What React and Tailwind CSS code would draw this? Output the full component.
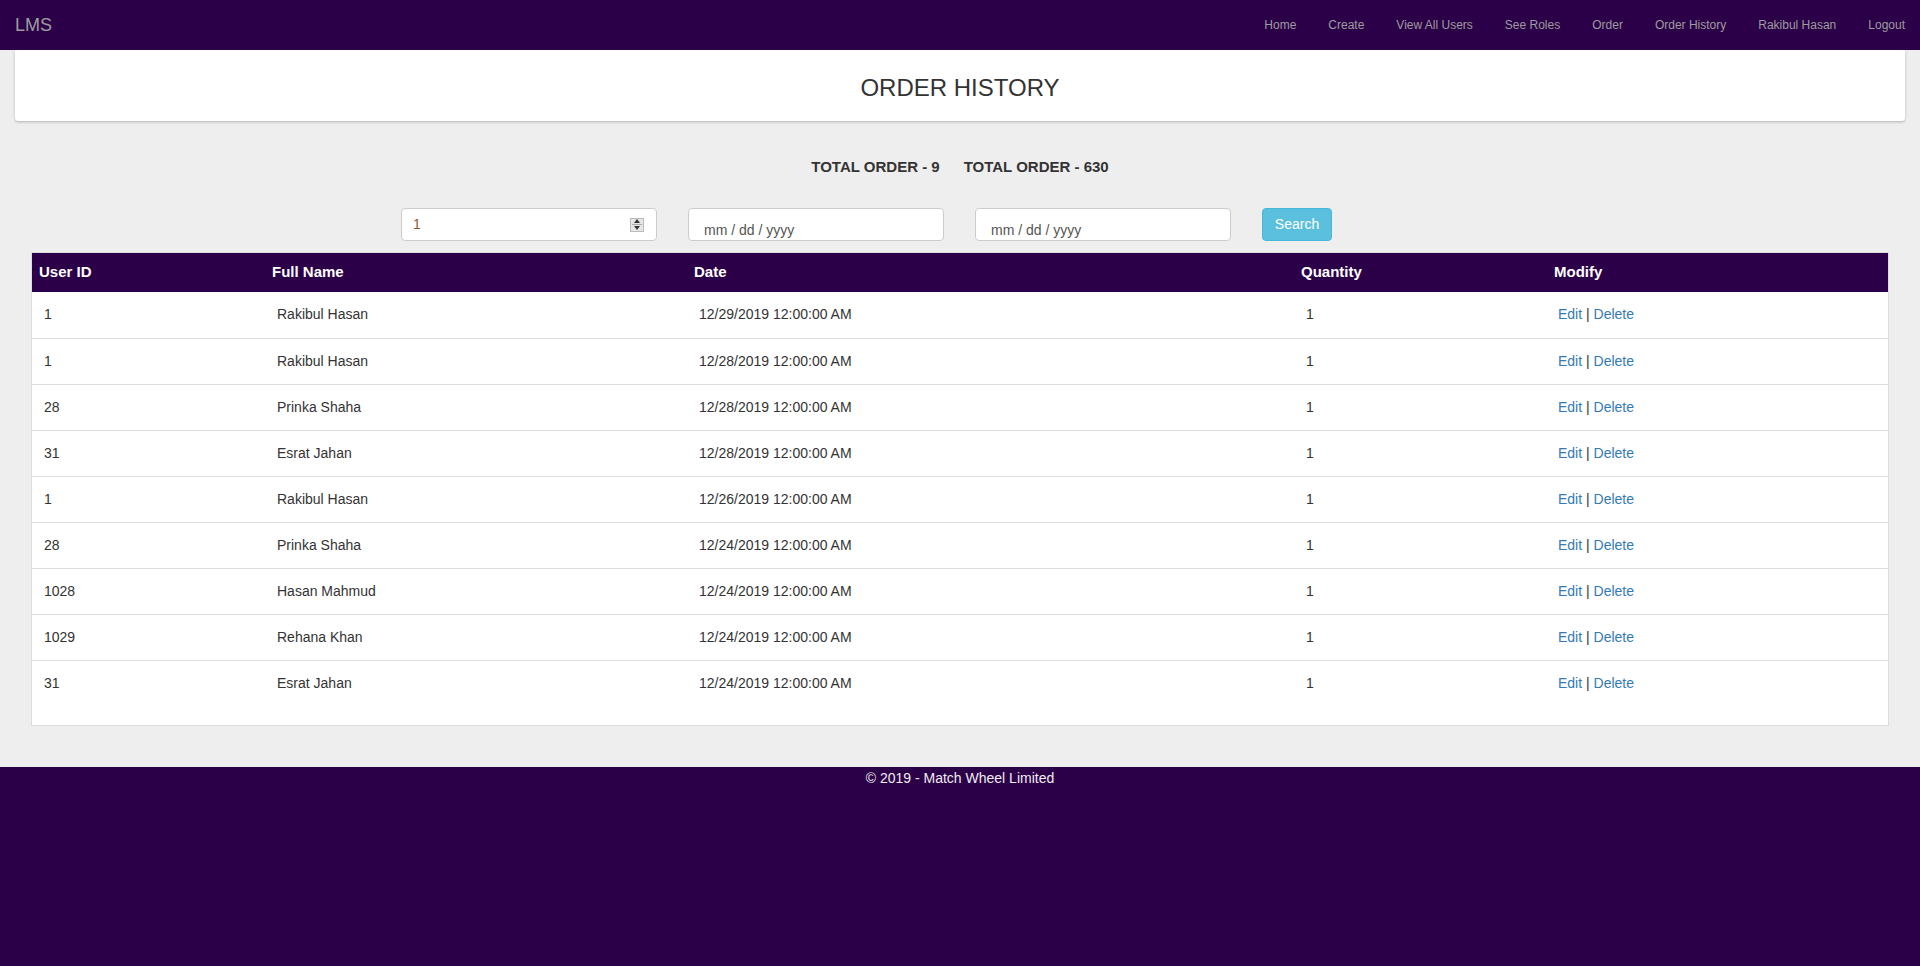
import React from "react";

const navLinks = ["Home", "Create", "View All Users", "See Roles", "Order", "Order History", "Rakibul Hasan", "Logout"];

const orders = [
  { id: 1, name: "Rakibul Hasan", date: "12/29/2019 12:00:00 AM", qty: 1 },
  { id: 1, name: "Rakibul Hasan", date: "12/28/2019 12:00:00 AM", qty: 1 },
  { id: 28, name: "Prinka Shaha", date: "12/28/2019 12:00:00 AM", qty: 1 },
  { id: 31, name: "Esrat Jahan", date: "12/28/2019 12:00:00 AM", qty: 1 },
  { id: 1, name: "Rakibul Hasan", date: "12/26/2019 12:00:00 AM", qty: 1 },
  { id: 28, name: "Prinka Shaha", date: "12/24/2019 12:00:00 AM", qty: 1 },
  { id: 1028, name: "Hasan Mahmud", date: "12/24/2019 12:00:00 AM", qty: 1 },
  { id: 1029, name: "Rehana Khan", date: "12/24/2019 12:00:00 AM", qty: 1 },
  { id: 31, name: "Esrat Jahan", date: "12/24/2019 12:00:00 AM", qty: 1 },
];

const DateBox = () => (
  <div className="w-[256px] h-[33px] bg-white border border-[#ccc] rounded-[4px] pl-[15px] pt-[13px] text-[14px] leading-[17px] text-[#555]">
    mm / dd / yyyy
  </div>
);

export default function App() {
  return (
    <div className="min-h-[966px] flex flex-col bg-[#eeeeee] font-['Liberation_Sans',Arial,sans-serif] text-[#333]">
      {/* Navbar */}
      <nav className="h-[50px] bg-[#2c0049] flex items-center justify-between pl-[15px]">
        <span className="text-[18px] text-[#9d9d9d]">LMS</span>
        <ul className="flex pr-[-1px]">
          {navLinks.map((l) => (
            <li key={l} className="px-[16px] last:pr-[15px] text-[12px] text-[#9d9d9d]">{l}</li>
          ))}
        </ul>
      </nav>

      {/* Title card */}
      <div className="mx-[15px] h-[71px] bg-white rounded-b-[3px] shadow-[0_1px_3px_rgba(0,0,0,0.25)] flex items-center justify-center pt-[4px]">
        <h2 className="text-[24px] leading-none">ORDER HISTORY</h2>
      </div>

      {/* Totals */}
      <div className="flex justify-center gap-[24px] mt-[37px] text-[15px] font-bold leading-[18px]">
        <span>TOTAL ORDER - 9</span>
        <span>TOTAL ORDER - 630</span>
      </div>

      {/* Filters */}
      <div className="flex gap-[31px] pl-[401px] mt-[32px]">
        <div className="w-[256px] h-[33px] bg-white border border-[#ccc] rounded-[4px] flex items-center justify-between pl-[11px] pr-[12px]">
          <span className="text-[14px] text-[#8a5a2b]">1</span>
          <div className="w-[14px] h-[14px] bg-[#e6e6e6] border border-[#bbb] flex flex-col items-center justify-center gap-[1px]">
            <svg width="6" height="4" viewBox="0 0 6 4"><path d="M3 0 L6 4 L0 4 Z" fill="#333" /></svg>
            <div className="w-[10px] h-px bg-[#aaa]" />
            <svg width="6" height="4" viewBox="0 0 6 4"><path d="M0 0 L6 0 L3 4 Z" fill="#333" /></svg>
          </div>
        </div>
        <DateBox />
        <DateBox />
        <button className="w-[70px] h-[33px] bg-[#5bc0de] border border-[#46b8da] rounded-[4px] text-white text-[14px]">
          Search
        </button>
      </div>

      {/* Table */}
      <div className="mx-[31px] mt-[11px] bg-white border border-[#ddd] pb-[19px]">
        <table className="w-full table-fixed border-collapse text-[14px]">
          <colgroup>
            <col className="w-[232px]" />
            <col className="w-[422px]" />
            <col className="w-[607px]" />
            <col className="w-[253px]" />
            <col />
          </colgroup>
          <thead>
            <tr className="bg-[#2c0049] text-white text-[15px] h-[39px]">
              <th className="text-left font-bold pl-[7px]">User ID</th>
              <th className="text-left font-bold pl-2">Full Name</th>
              <th className="text-left font-bold pl-2">Date</th>
              <th className="text-left font-bold pl-2">Quantity</th>
              <th className="text-left font-bold pl-2">Modify</th>
            </tr>
          </thead>
          <tbody>
            {orders.map((o, i) => (
              <tr key={i} className={`h-[46px] ${i > 0 ? "border-t border-[#ddd]" : ""}`}>
                <td className="pl-3">{o.id}</td>
                <td className="pl-[13px]">{o.name}</td>
                <td className="pl-[13px]">{o.date}</td>
                <td className="pl-[13px] text-[#333]">{o.qty}</td>
                <td className="pl-3">
                  <span className="text-[#337ab7]">Edit</span> | <span className="text-[#337ab7]">Delete</span>
                </td>
              </tr>
            ))}
          </tbody>
        </table>
      </div>

      {/* Footer */}
      <footer className="mt-[41px] flex-1 bg-[#2c0049] text-center text-[14px] leading-5 text-[#eee] pt-px">
        © 2019 - Match Wheel Limited
      </footer>
    </div>
  );
}
